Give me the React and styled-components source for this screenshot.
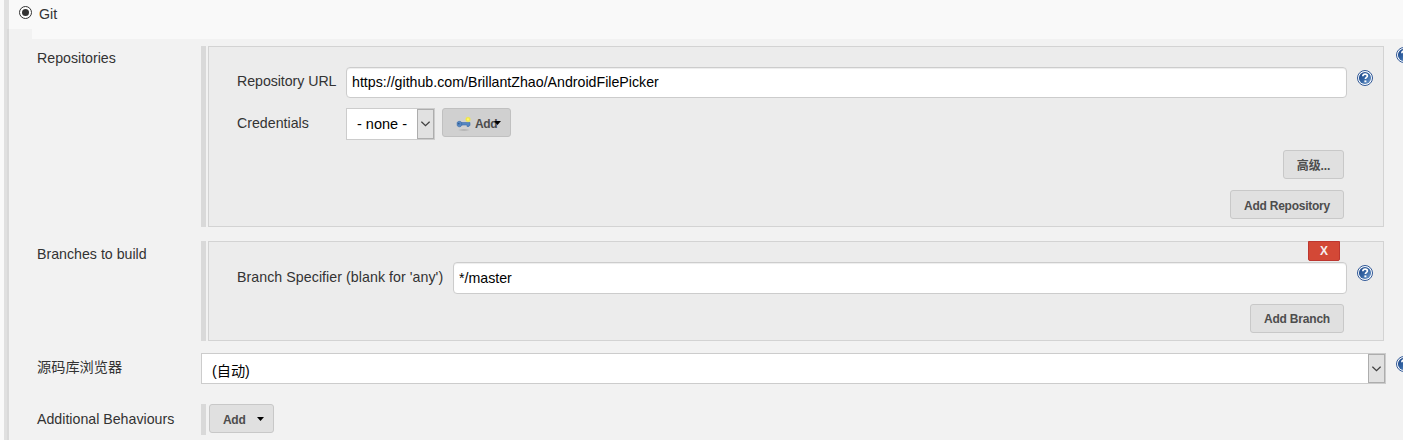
import React from "react";
import styled, { createGlobalStyle, css } from "styled-components";

const GlobalStyle = createGlobalStyle`
  *, *::before, *::after { box-sizing: border-box; }
  body {
    margin: 0;
    background: #f2f2f2;
    color: #333;
    font-family: "Liberation Sans", "Noto Sans CJK SC", sans-serif;
    font-size: 14.2px;
    line-height: 20px;
  }
`;

const Page = styled.div`
  display: flex;
  width: 1403px;
  height: 440px;
  overflow: hidden;
  background: #f2f2f2;
`;

const Gutter = styled.div`
  flex: none;
  width: 4px;
  background: #f9f9f9;
`;

const SectionBar = styled.div`
  flex: none;
  width: 5px;
  padding: 29px 0 0 3px;
  background: #e0e0e0;
`;

const SectionBarShade = styled.div`
  height: 100%;
  background: #d9d9d9;
`;

const Content = styled.main`
  flex: none;
  width: 1420px;
`;

const Header = styled.header`
  background: #f9f9f9;
`;

const Option = styled.label`
  display: flex;
  align-items: flex-start;
  height: 29px;
  padding: 4px 0 0 10px;
  gap: 7px;
`;

const Radio = styled.span`
  display: grid;
  place-items: center;
  width: 13px;
  height: 13px;
  margin-top: 2px;
  border: 1px solid #333;
  border-radius: 50%;
  background: #fff;

  &::after {
    content: "";
    width: 7px;
    height: 7px;
    border-radius: 50%;
    background: #333;
  }
`;

const HeaderNotch = styled.div`
  width: 23px;
  height: 10px;
  background: #f2f2f2;
`;

const Row = styled.section`
  display: flex;
  align-items: flex-start;
  height: ${(p) => p.$height}px;
  margin-top: ${(p) => p.$gap}px;
  padding-left: 28px;
`;

const RowLabel = styled.div`
  flex: none;
  width: 164px;
  padding-top: ${(p) => p.$drop}px;
`;

const Field = styled.div`
  display: flex;
  flex: none;
  width: 1185px;
  height: 100%;
  margin-right: 10px;
`;

const DragHandle = styled.div`
  flex: none;
  width: 5px;
  margin-right: ${(p) => p.$gap}px;
  background: #d9d9d9;
`;

const Panel = styled.div`
  width: 1176px;
  height: 100%;
  padding-left: 28px;
  border: 1px solid #d3d3d3;
  background: #ececec;
`;

const PanelTop = styled.div`
  display: flex;
  justify-content: flex-end;
  height: 20px;
  padding-right: 43px;
`;

const FormLine = styled.div`
  display: flex;
  align-items: flex-start;
  height: ${(p) => p.$height}px;
  margin-bottom: 10px;
`;

const FormLabel = styled.div`
  flex: none;
  width: ${(p) => p.$width}px;
  padding-top: ${(p) => p.$drop}px;
  letter-spacing: ${(p) => p.$spacing || 0}px;
  white-space: nowrap;
`;

const TextInput = styled.input`
  width: ${(p) => p.$width}px;
  height: 100%;
  margin: 0 10px 0 0;
  padding: 0 5px ${(p) => p.$lift || 0}px;
  border: 1px solid #ccc;
  border-radius: 4px;
  background: #fff;
  box-shadow: inset 0 1px 1px rgba(0, 0, 0, 0.075);
  color: #000;
  font: inherit;
  outline: none;
`;

const HelpButton = styled.span`
  flex: none;
  width: 16px;
  height: 16px;
  margin-top: ${(p) => p.$drop}px;

  svg { display: block; }
`;

const SelectBox = styled.div`
  display: flex;
  flex: none;
  width: ${(p) => p.$width}px;
  height: 100%;
  border: 1px solid #ccc;
  background: #fff;
  color: #000;
  font-size: ${(p) => p.$size}px;
`;

const SelectValue = styled.span`
  flex: 1;
  padding: ${(p) => p.$drop}px 0 0 10px;
  white-space: nowrap;
`;

const SelectArrow = styled.span`
  display: grid;
  place-items: center;
  width: 17px;
  height: 100%;
  border: 1px solid #adadad;
  background: #e1e1e1;
`;

const Button = styled.button`
  display: flex;
  align-items: center;
  justify-content: center;
  flex: none;
  width: ${(p) => p.$width}px;
  height: 29px;
  margin: 0;
  padding: ${(p) => (p.$raised ? 0 : 2)}px 0 0;
  border: 1px solid #c8c8c8;
  border-radius: 3px;
  background: #e0e0e0;
  color: #4d4d4d;
  font: bold 12px/18px "Liberation Sans", "Noto Sans CJK SC", sans-serif;
  letter-spacing: ${(p) => p.$spacing || 0}px;
  white-space: nowrap;

  ${(p) => p.$menu && css`
    justify-content: flex-start;
    padding-left: 13px;
  `}

  ${(p) => p.$pressed && css`
    margin-left: 7px;
    border-color: #c0c0c0;
    background: #d0d0d0;
  `}
`;

const DeleteButton = styled.button`
  width: 32px;
  height: 20px;
  margin-top: -1px;
  padding: 0;
  border: 1px solid #bd362f;
  border-radius: 0 0 2px 2px;
  background: #d34836;
  color: #f5eeee;
  font: bold 12px/18px "Liberation Sans", sans-serif;
`;

const Actions = styled.div`
  display: flex;
  flex-direction: column;
  align-items: flex-end;
  gap: 11px;
  padding-right: 39px;
`;

const CaretIcon = styled.svg`
  flex: none;
  margin: -2px 0 0 ${(p) => p.$offset}px;
`;

const KeyDrawing = styled.svg`
  flex: none;
  margin: 1px 3px 0 0;
`;

function Help({ drop }) {
  return (
    <HelpButton $drop={drop}>
      <svg width="16" height="16" viewBox="0 0 16 16">
        <defs>
          <linearGradient id="helpFill" x1="0" y1="0" x2="1" y2="1">
            <stop offset="0" stopColor="#1d4486" />
            <stop offset="0.5" stopColor="#3465a4" />
            <stop offset="1" stopColor="#7ba3d2" />
          </linearGradient>
        </defs>
        <circle cx="8" cy="8" r="7.5" fill="#fff" stroke="#2f5796" strokeWidth="1" />
        <circle cx="8" cy="8" r="6.1" fill="url(#helpFill)" />
        <path d="M5.8 6.2C5.9 4.6 6.9 4.1 8.1 4.1c1.5 0 2.3.7 2.3 1.8 0 1.5-2 1.6-2 3.2" fill="none" stroke="#fff" strokeWidth="1.7" />
        <rect x="7.4" y="10.4" width="2" height="1.9" fill="#fff" />
      </svg>
    </HelpButton>
  );
}

function Chevron() {
  return (
    <svg width="9" height="6" viewBox="0 0 9 6">
      <path d="M.4.7 4.5 4.7 8.6.7" fill="none" stroke="#404040" strokeWidth="1.3" />
    </svg>
  );
}

function Caret({ offset }) {
  return (
    <CaretIcon $offset={offset} width="7" height="4" viewBox="0 0 7 4">
      <path d="M0 0h7L3.5 4z" fill="#000" />
    </CaretIcon>
  );
}

function KeyIcon() {
  return (
    <KeyDrawing width="16" height="16" viewBox="0 0 16 16">
      <defs>
        <radialGradient id="keyGlow">
          <stop offset="0" stopColor="#fffb8a" />
          <stop offset="0.55" stopColor="#f4e83c" />
          <stop offset="1" stopColor="#f4e83c" stopOpacity="0.15" />
        </radialGradient>
        <radialGradient id="keyShadow">
          <stop offset="0" stopColor="#a8a8a8" />
          <stop offset="1" stopColor="#a8a8a8" stopOpacity="0" />
        </radialGradient>
      </defs>
      <ellipse cx="8" cy="14" rx="6.5" ry="1.3" fill="url(#keyShadow)" />
      <path d="M5 6.5h9v3h-1v1h-2V9H5z" fill="#5687c2" stroke="#3e6fab" strokeWidth=".6" />
      <path d="M1.2 6.4C2.4 5 4.6 5 5.7 6.5v3C4.8 11.2 2.2 11.2 1.2 9.6z" fill="#5687c2" stroke="#3e6fab" strokeWidth=".7" />
      <rect x="1.8" y="7.1" width="1.7" height="1.2" fill="#2c578f" />
      <circle cx="12" cy="3.4" r="3" fill="url(#keyGlow)" />
    </KeyDrawing>
  );
}

export default function App() {
  return (
    <>
      <GlobalStyle />
      <Page>
        <Gutter />
        <SectionBar><SectionBarShade /></SectionBar>
        <Content>
          <Header>
            <Option><Radio />Git</Option>
            <HeaderNotch />
          </Header>

          <Row $gap={7} $height={181}>
            <RowLabel $drop={2}>Repositories</RowLabel>
            <Field>
              <DragHandle $gap={2} />
              <Panel>
                <PanelTop />
                <FormLine $height={31}>
                  <FormLabel $width={109} $drop={4} $spacing={-0.05}>Repository URL</FormLabel>
                  <TextInput $width={1001} $lift={1} readOnly value="https://github.com/BrillantZhao/AndroidFilePicker" />
                  <Help drop={3} />
                </FormLine>
                <FormLine $height={32}>
                  <FormLabel $width={109} $drop={5}>Credentials</FormLabel>
                  <SelectBox $width={89} $size={14.5}>
                    <SelectValue $drop={5}>- none -</SelectValue>
                    <SelectArrow><Chevron /></SelectArrow>
                  </SelectBox>
                  <Button $width={69} $spacing={-0.4} $menu $pressed><KeyIcon />Add<Caret offset={-3} /></Button>
                </FormLine>
                <Actions>
                  <Button $width={61} $spacing={-0.1}>高级...</Button>
                  <Button $width={114} $spacing={-0.25}>Add Repository</Button>
                </Actions>
              </Panel>
            </Field>
            <Help drop={1} />
          </Row>

          <Row $gap={14} $height={100}>
            <RowLabel $drop={3}>Branches to build</RowLabel>
            <Field>
              <DragHandle $gap={2} />
              <Panel>
                <PanelTop><DeleteButton>X</DeleteButton></PanelTop>
                <FormLine $height={32}>
                  <FormLabel $width={216} $drop={5} $spacing={0.06}>Branch Specifier (blank for 'any')</FormLabel>
                  <TextInput $width={894} readOnly value="*/master" />
                  <Help drop={3} />
                </FormLine>
                <Actions>
                  <Button $width={94} $spacing={-0.2} $raised>Add Branch</Button>
                </Actions>
              </Panel>
            </Field>
          </Row>

          <Row $gap={12} $height={31}>
            <RowLabel $drop={4}>源码库浏览器</RowLabel>
            <Field>
              <SelectBox $width={1185} $size={14.2}>
                <SelectValue $drop={7}>(自动)</SelectValue>
                <SelectArrow><Chevron /></SelectArrow>
              </SelectBox>
            </Field>
            <Help drop={3} />
          </Row>

          <Row $gap={20} $height={31}>
            <RowLabel $drop={5}>Additional Behaviours</RowLabel>
            <Field>
              <DragHandle $gap={3} />
              <Button $width={65} $spacing={-0.3} $menu>Add<Caret offset={12} /></Button>
            </Field>
          </Row>
        </Content>
      </Page>
    </>
  );
}
